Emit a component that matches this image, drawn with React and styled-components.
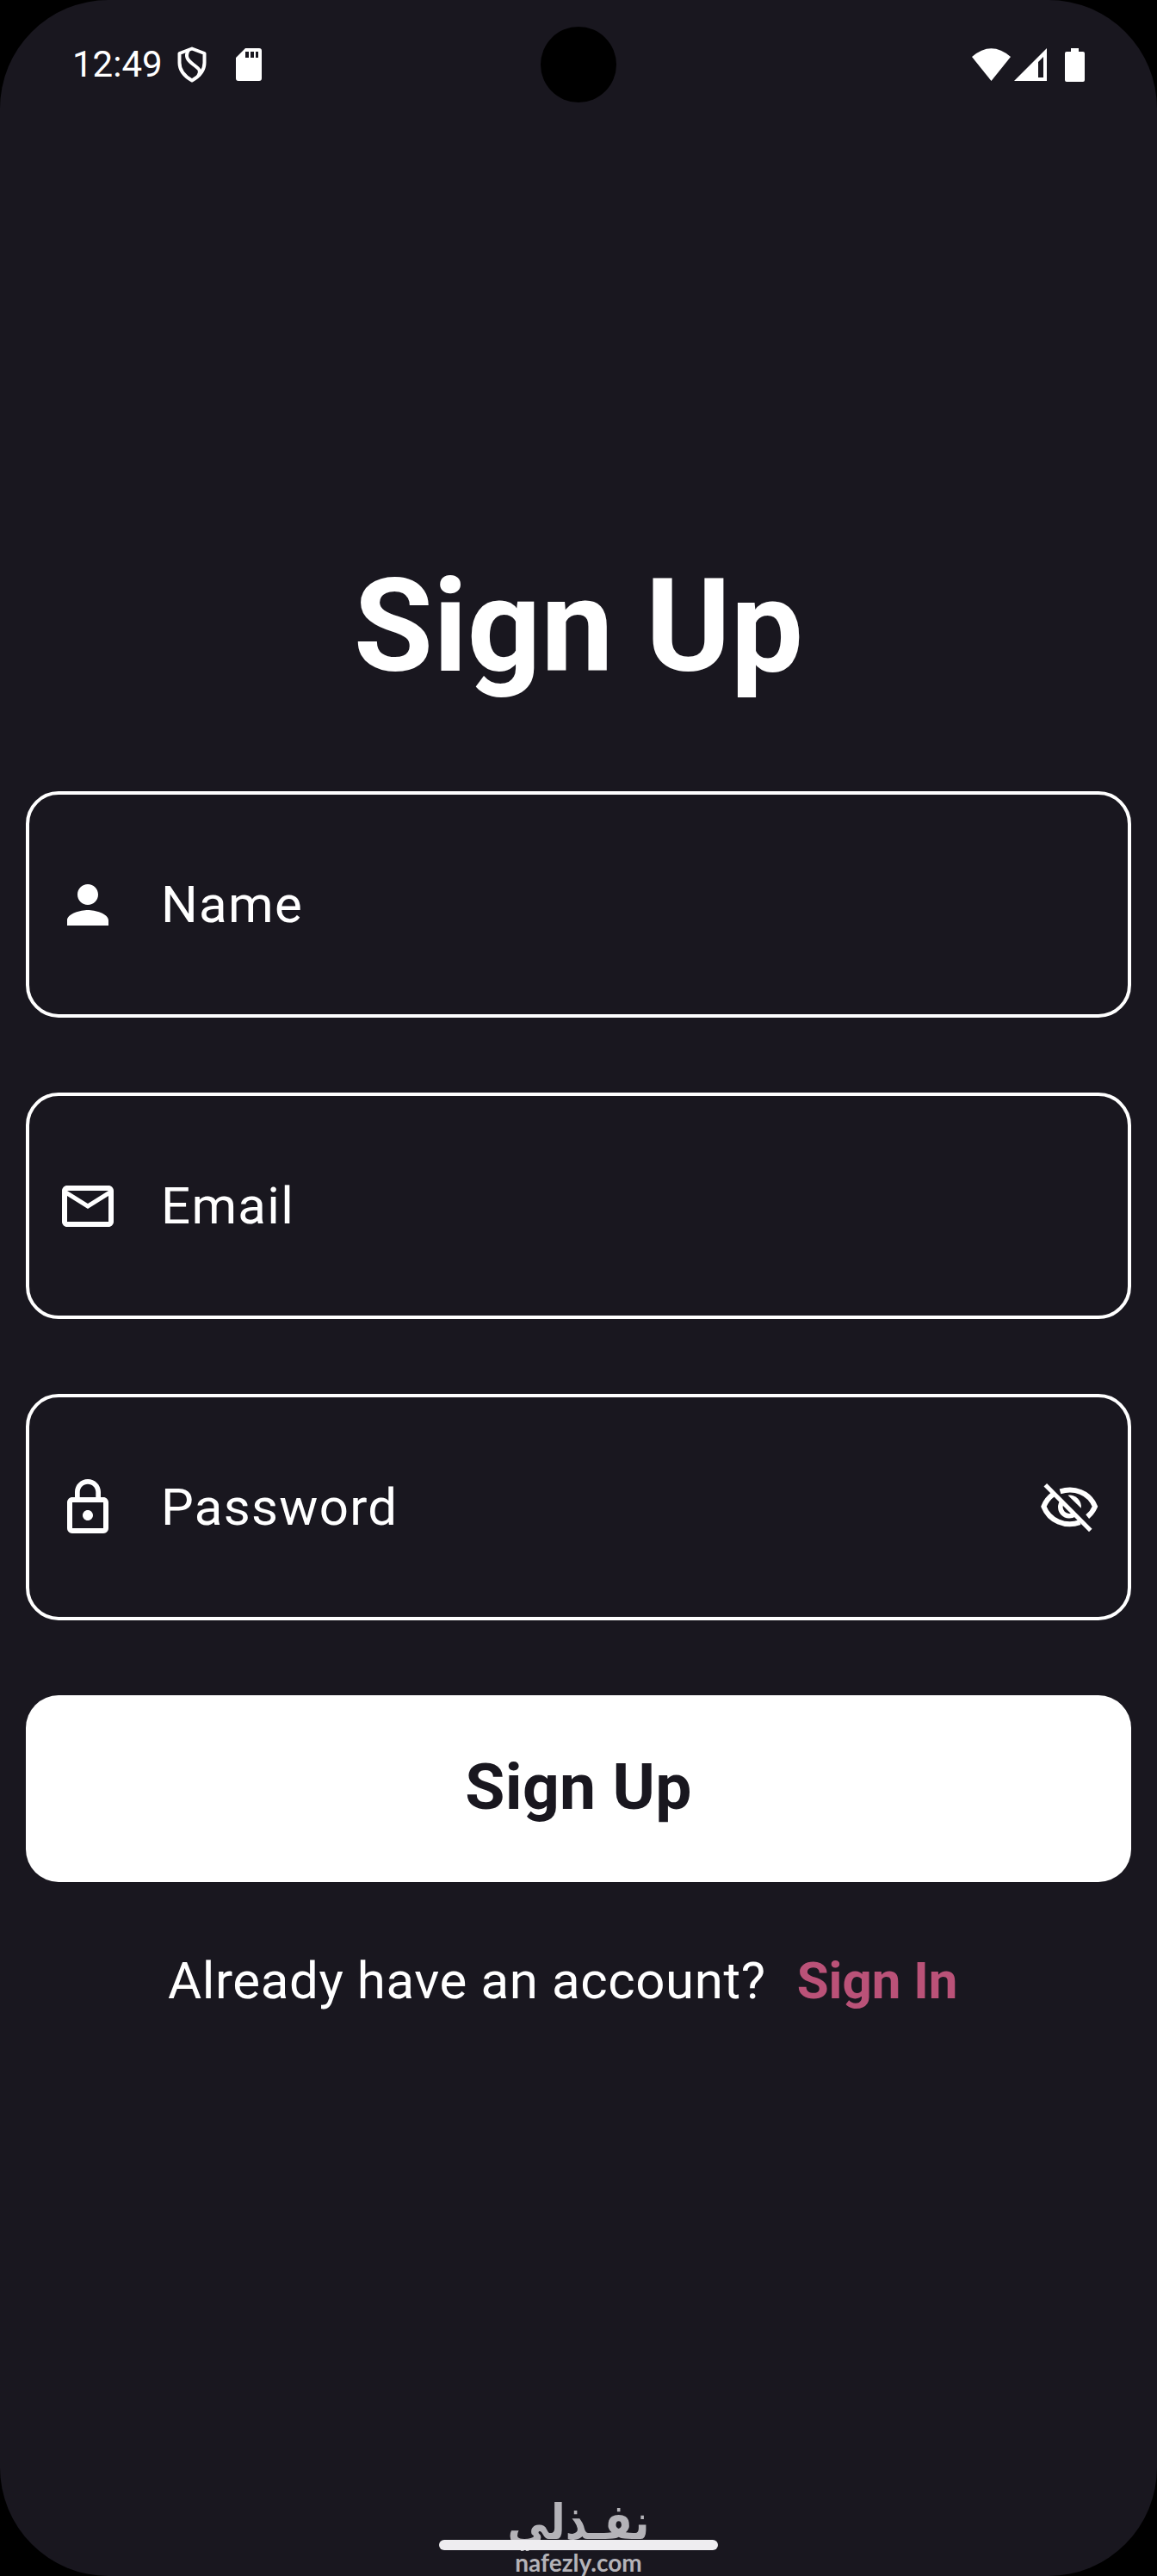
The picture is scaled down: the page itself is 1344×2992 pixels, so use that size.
import React, { useState } from 'react';
import styled, { createGlobalStyle } from 'styled-components';
import { MdPerson, MdMailOutline, MdLockOutline } from 'react-icons/md';

const fields = [
	{ name: 'name', label: 'Name', icon: <MdPerson /> },
	{ name: 'email', label: 'Email', icon: <MdMailOutline /> },
	{ name: 'password', label: 'Password', icon: <MdLockOutline />, secret: true },
];

function StatusBar() {
	return (
		<StatusWrap>
			<StatusGroup>
				<Clock>12:49</Clock>
				<ShieldIcon viewBox="0 0 34 42" fill="none" stroke="#fff" strokeWidth="4">
					<path
						strokeLinejoin="round"
						d="M17 2.5 L31.5 8 V19 C31.5 29 24 35.5 17 39.5 C10 35.5 2.5 29 2.5 19 V8 Z"
					/>
					<path d="M13 4 C9 11 11 15 18 20.5 C25 26 28 27 24.5 34" />
				</ShieldIcon>
				<CardIcon viewBox="0 0 30 38" fill="#fff">
					<path
						fillRule="evenodd"
						d="M11 0 H27 Q30 0 30 3 V35 Q30 38 27 38 H3 Q0 38 0 35 V11 Z M11 4 V11 H15 V4 Z M17 4 V11 H21 V4 Z M23 4 V11 H26 V4 Z"
					/>
				</CardIcon>
			</StatusGroup>
			<StatusGroup>
				<WifiIcon viewBox="0 0 45 38" fill="#fff">
					<path d="M0 10 Q22.5 -9.5 45 10 L22.5 38 Z" />
				</WifiIcon>
				<SignalIcon viewBox="0 0 38 38" fill="#fff">
					<path fillRule="evenodd" d="M38 0 V38 H0 Z M34 10 L28 16 V34 H34 Z" />
				</SignalIcon>
				<BatteryIcon viewBox="0 0 23 39" fill="#fff">
					<path d="M7 0 H16 V4 H21 Q23 4 23 6 V37 Q23 39 21 39 H2 Q0 39 0 37 V6 Q0 4 2 4 H7 Z" />
				</BatteryIcon>
			</StatusGroup>
			<Camera />
		</StatusWrap>
	);
}

function HideIcon() {
	return (
		<svg viewBox="0 0 72 72" fill="none" stroke="#fff" strokeWidth="6">
			<path strokeWidth="5" d="M8.3 9.8 L60.8 62.4" />
			<path d="M25.5 17.3 C42 12.5 59 18 66 34.8 C64 39.5 61 43.5 57.2 46.6" />
			<path d="M17.5 20.5 C12 24.5 8.5 29.5 6.4 34.8 C13 51.5 31 59 48.5 53.2" />
			<path
				fill="#fff"
				stroke="none"
				d="M34.5 21.8 A13.2 13.2 0 0 1 49.8 36.8 Z"
			/>
			<path strokeWidth="5.5" d="M28 29 A10.4 10.4 0 0 0 42.6 43.6" />
		</svg>
	);
}

function App() {
	const [hidden, setHidden] = useState(true);

	return (
		<Screen>
			<GlobalStyle />
			<StatusBar />
			<Form onSubmit={(e) => e.preventDefault()}>
				<Title>Sign Up</Title>
				{fields.map((field) => (
					<Field key={field.name}>
						<FieldIcon>{field.icon}</FieldIcon>
						<Input
							type={field.secret && hidden ? 'password' : 'text'}
							name={field.name}
							placeholder={field.label}
						/>
						{field.secret && (
							<Toggle type="button" onClick={() => setHidden(!hidden)}>
								<HideIcon />
							</Toggle>
						)}
					</Field>
				))}
				<SubmitButton>Sign Up</SubmitButton>
				<Footer>
					<span>Already have an account?</span>
					<SignInLink>Sign In</SignInLink>
				</Footer>
			</Form>
			<BottomBar>
				<Brand>
					<BrandArabic lang="ar">نفـذلي</BrandArabic>
					<BrandLatin>nafezly.com</BrandLatin>
				</Brand>
				<HomeIndicator />
			</BottomBar>
		</Screen>
	);
}

export default App;

const GlobalStyle = createGlobalStyle`
	* {
		box-sizing: border-box;
	}

	body {
		margin: 0;
		background-color: #000;
		font-family: Roboto, sans-serif;
	}
`;

const Screen = styled.div`
	display: flex;
	flex-direction: column;
	width: 1344px;
	height: 2992px;
	border-radius: 126px;
	background-color: #19171f;
	color: #fff;
	overflow: hidden;
	position: relative;
`;

const StatusWrap = styled.div`
	display: flex;
	justify-content: space-between;
	height: 150px;
	padding: 0 84px;
	position: relative;
`;

const StatusGroup = styled.div`
	display: flex;
	align-items: center;
`;

const Clock = styled.span`
	font-size: 42px;
	line-height: 50px;
`;

const ShieldIcon = styled.svg`
	width: 34px;
	height: 42px;
	margin-left: 17px;
`;

const CardIcon = styled.svg`
	width: 30px;
	height: 38px;
	margin-left: 34px;
`;

const WifiIcon = styled.svg`
	width: 45px;
	height: 38px;
`;

const SignalIcon = styled.svg`
	width: 38px;
	height: 38px;
	margin-left: 4px;
`;

const BatteryIcon = styled.svg`
	width: 23px;
	height: 39px;
	margin-left: 21px;
`;

const Camera = styled.div`
	position: absolute;
	left: 628px;
	top: 31px;
	width: 88px;
	height: 88px;
	border-radius: 50%;
	background-color: #000;
`;

const Form = styled.form`
	display: flex;
	flex-direction: column;
	flex: 1;
	padding: 490px 30px 0;
`;

const Title = styled.h1`
	margin: 0 0 103px;
	font-size: 150px;
	font-weight: 700;
	line-height: 176px;
	text-align: center;
`;

const Field = styled.label`
	display: flex;
	align-items: center;
	height: 263px;
	margin-bottom: 87px;
	padding: 0 32px;
	border: 4px solid #fff;
	border-radius: 38px;
`;

const FieldIcon = styled.span`
	display: flex;
	margin-right: 49px;

	svg {
		width: 72px;
		height: 72px;
	}
`;

const Input = styled.input`
	flex: 1;
	min-width: 0;
	padding: 0;
	border: none;
	outline: none;
	background: none;
	color: #fff;
	font-family: inherit;
	font-size: 60px;
	letter-spacing: 1.3px;

	&::placeholder {
		color: #fff;
		opacity: 1;
	}
`;

const Toggle = styled.button`
	width: 72px;
	height: 72px;
	padding: 0;
	border: none;
	background: none;

	svg {
		display: block;
	}
`;

const SubmitButton = styled.button`
	height: 217px;
	padding: 0 0 6px;
	border: none;
	border-radius: 38px;
	background-color: #fff;
	color: #19171f;
	font-family: inherit;
	font-size: 75px;
	font-weight: 700;
	letter-spacing: 0.3px;
`;

const Footer = styled.div`
	display: flex;
	gap: 36px;
	margin-top: 80px;
	padding-left: 165px;
	font-size: 60px;
	line-height: 70px;
	letter-spacing: 0.6px;
	white-space: nowrap;
`;

const SignInLink = styled.a`
	color: #ba5278;
	font-weight: 700;
	letter-spacing: 0;
`;

const BottomBar = styled.div`
	height: 110px;
	position: relative;
`;

const Brand = styled.div`
	display: flex;
	flex-direction: column;
	align-items: center;
	padding-top: 11px;
	color: #b4b3b8;
`;

const BrandArabic = styled.span`
	height: 66px;
	font-family: 'DejaVu Sans', sans-serif;
	font-size: 57px;
	font-weight: 700;
	line-height: 72px;
	transform: scaleX(0.85);
`;

const BrandLatin = styled.span`
	font-family: Lato, sans-serif;
	font-size: 28px;
	font-weight: 700;
	line-height: 34px;
`;

const HomeIndicator = styled.div`
	position: absolute;
	left: 510px;
	top: 68px;
	width: 324px;
	height: 12px;
	border-radius: 6px;
	background-color: #eeedf0;
`;
